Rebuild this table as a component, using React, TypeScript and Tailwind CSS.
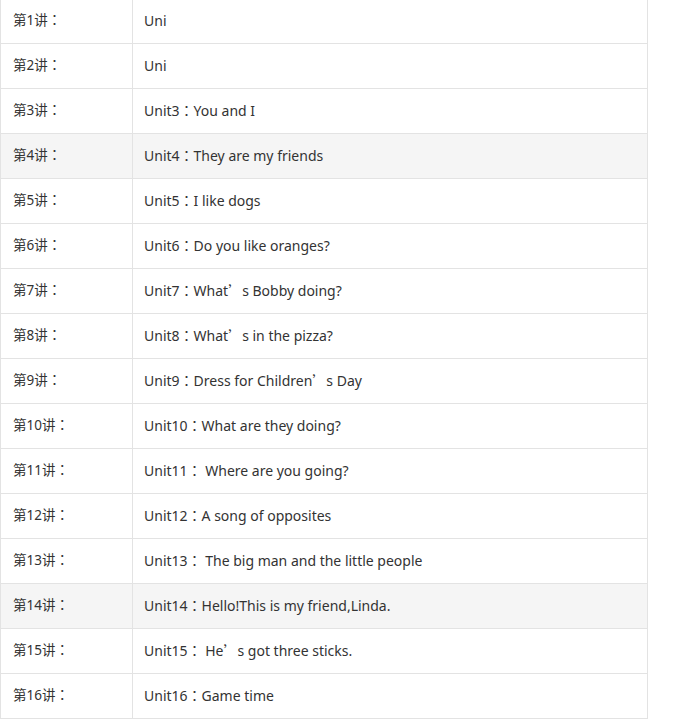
import type { ReactNode } from 'react';

// curly quote renders full-width in the CJK face, as in the original page
const Q = () => <span className="font-['Noto_Sans_CJK_SC',sans-serif]">’</span>;

const lessons: { label: string; title: ReactNode; shaded?: boolean }[] = [
	{ label: '第1讲：', title: 'Uni' },
	{ label: '第2讲：', title: 'Uni' },
	{ label: '第3讲：', title: 'Unit3：You and I' },
	{ label: '第4讲：', title: 'Unit4：They are my friends', shaded: true },
	{ label: '第5讲：', title: 'Unit5：I like dogs' },
	{ label: '第6讲：', title: 'Unit6：Do you like oranges?' },
	{ label: '第7讲：', title: <>Unit7：What<Q />s Bobby doing?</> },
	{ label: '第8讲：', title: <>Unit8：What<Q />s in the pizza?</> },
	{ label: '第9讲：', title: <>Unit9：Dress for Children<Q />s Day</> },
	{ label: '第10讲：', title: 'Unit10：What are they doing?' },
	{ label: '第11讲：', title: 'Unit11： Where are you going?' },
	{ label: '第12讲：', title: 'Unit12：A song of opposites' },
	{ label: '第13讲：', title: 'Unit13： The big man and the little people' },
	{ label: '第14讲：', title: 'Unit14：Hello!This is my friend,Linda.', shaded: true },
	{ label: '第15讲：', title: <>Unit15： He<Q />s got three sticks.</> },
	{ label: '第16讲：', title: 'Unit16：Game time' },
];

export default function App() {
	return (
		<div className="min-h-[722px] bg-white font-['Noto_Sans','Noto_Sans_CJK_TC',sans-serif] text-[14px] text-[#333]">
			<div className="-mt-[1px] w-[648px] border-x border-[#e3e3e3]">
				{lessons.map((row) => (
					<div
						key={row.label}
						className={`flex h-[45px] border-b border-[#e3e3e3] ${row.shaded ? 'bg-[#f5f5f5]' : 'bg-white'}`}
					>
						<div className="flex w-[132px] shrink-0 items-center border-r border-[#e3e3e3] pb-[2px] pl-[12px] text-[13.5px]">
							{row.label}
						</div>
						<div className="flex flex-1 items-center whitespace-pre pb-[2px] pl-[11px]">{row.title}</div>
					</div>
				))}
			</div>
		</div>
	);
}
